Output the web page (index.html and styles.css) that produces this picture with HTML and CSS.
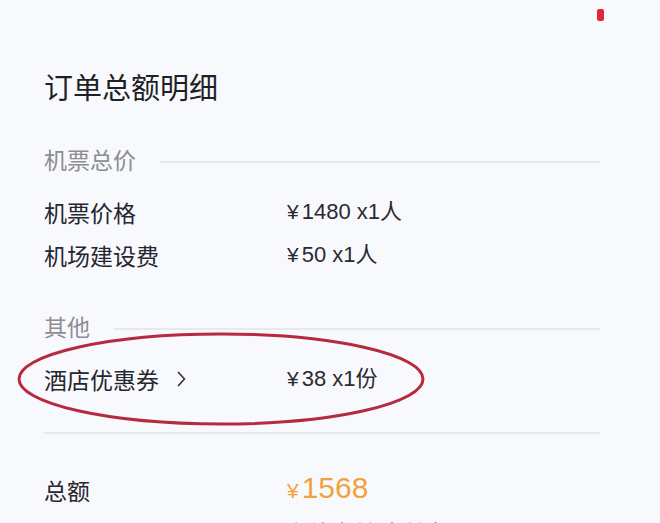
FILE: index.html
```html
<!DOCTYPE html>
<html lang="zh">
<head>
<meta charset="utf-8">
<title>订单总额明细</title>
<link rel="stylesheet" href="styles.css">
</head>
<body>
<div class="page">
  <span class="rec-dot"></span>
  <h1 class="title">订单总额明细</h1>

  <div class="section-head section-head--first">
    <span class="section-name">机票总价</span>
    <span class="section-line"></span>
  </div>
  <div class="row row--first">
    <span class="label">机票价格</span>
    <span class="value"><span class="yen">¥</span>1480 x1人</span>
  </div>
  <div class="row">
    <span class="label">机场建设费</span>
    <span class="value"><span class="yen">¥</span>50 x1人</span>
  </div>

  <div class="section-head section-head--second">
    <span class="section-name">其他</span>
    <span class="section-line"></span>
  </div>
  <div class="row row--first">
    <span class="label">酒店优惠券<svg class="chev" width="11" height="18" viewBox="0 0 11 18"><path d="M2.5 2.5 L8.5 9 L2.5 15.5" fill="none" stroke="#33333c" stroke-width="1.7" stroke-linecap="round" stroke-linejoin="round"/></svg></span>
    <span class="value"><span class="yen">¥</span>38 x1份</span>
  </div>

  <div class="divider"></div>

  <div class="row row--total">
    <span class="label">总额</span>
    <span class="value total"><span class="yen yen--total">¥</span>1568</span>
  </div>
  <div class="row row--last">
    <span class="label">支付方式</span>
    <span class="value">在线支付 支付宝</span>
  </div>

  <svg class="circle-mark" width="412" height="98" viewBox="0 0 412 98">
    <ellipse cx="205" cy="48" rx="202" ry="45" fill="none" stroke="#b52a3e" stroke-width="3"/>
  </svg>
</div>
</body>
</html>
```

FILE: styles.css
```css
html, body {
  margin: 0;
  padding: 0;
  background: #f8f9fc;
}

.page {
  position: relative;
  height: 523px;
  overflow: hidden;
  padding: 71px 60px 0 44px;
  box-sizing: border-box;
  font-family: "Noto Sans CJK SC", "Liberation Sans", sans-serif;
  color: #26262e;
}

.rec-dot {
  position: absolute;
  left: 597px;
  top: 9px;
  width: 7px;
  height: 12px;
  border-radius: 2px;
  background: #e0283a;
}

.title {
  margin: 0;
  font-size: 29px;
  line-height: 30px;
  font-weight: 400;
  color: #1f1f26;
}

.section-head {
  display: flex;
  align-items: center;
  gap: 24px;
  height: 24px;
}

.section-head--first {
  margin-top: 46px;
}

.section-head--second {
  margin-top: 44px;
}

.section-name {
  font-size: 23px;
  line-height: 24px;
  color: #8c8d95;
}

.section-line {
  flex: 1;
  height: 2px;
  margin-top: 6px;
  background: #e8e9ed;
}

.row {
  display: grid;
  grid-template-columns: 243px 1fr;
  align-items: center;
  height: 30px;
  margin-top: 13px;
}

.row--first {
  margin-top: 26px;
}

.row--total {
  margin-top: 37px;
  height: 34px;
}

.row--last {
  margin-top: 14px;
}

.label {
  display: flex;
  align-items: center;
  font-size: 23px;
  line-height: 30px;
  color: #26262e;
}

.chev {
  margin-left: 17px;
}

.value {
  font-family: "Liberation Sans", "Noto Sans CJK SC", sans-serif;
  font-size: 22px;
  line-height: 30px;
  color: #2a2a30;
}

.value .yen {
  font-size: 21px;
  margin-right: 3px;
}

.total {
  font-size: 30px;
  line-height: 34px;
  color: #f2a23a;
}

.value .yen--total {
  font-size: 21px;
  margin-right: 3px;
}

.divider {
  height: 2px;
  margin-top: 38px;
  background: #e8e9ed;
}

.circle-mark {
  position: absolute;
  left: 16px;
  top: 331px;
}
```
